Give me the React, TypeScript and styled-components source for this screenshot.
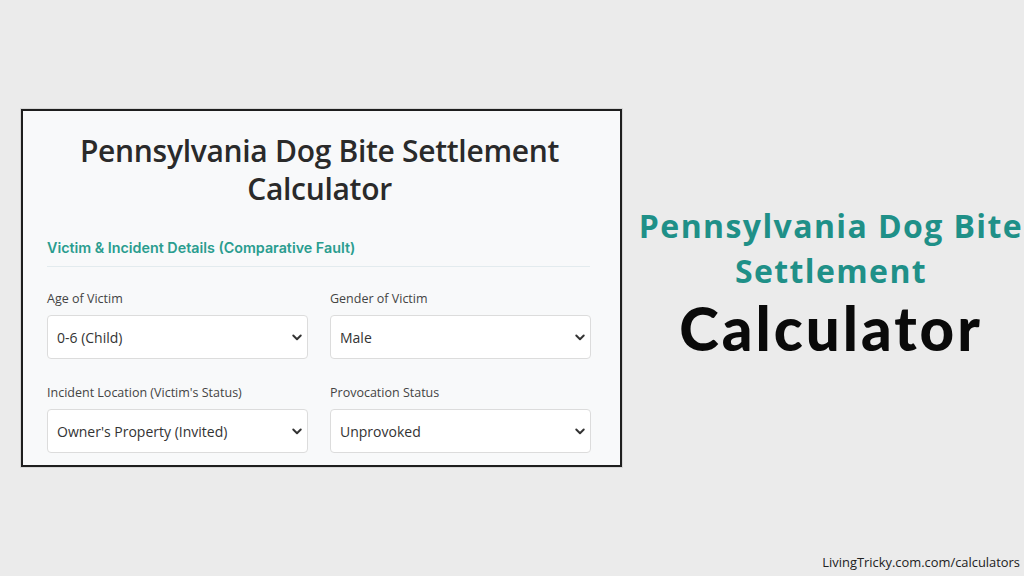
import React from 'react';
import styled, { createGlobalStyle } from 'styled-components';

const GlobalStyle = createGlobalStyle`
  html, body {
    margin: 0;
    padding: 0;
    background: #ebebeb;
  }
  * {
    box-sizing: border-box;
  }
`;

const Page = styled.div`
  width: 1024px;
  height: 576px;
  display: flex;
  flex-direction: column;
  overflow: hidden;
`;

const Main = styled.div`
  display: flex;
  align-items: flex-start;
  padding: 109px 0 0 21px;
`;

const Card = styled.div`
  width: 601px;
  height: 358px;
  background: #f8f9fa;
  border: 2px solid #1e1e1e;
  box-shadow: 0 0 0 1px #d6d6d6;
  padding: 21px 30px 0 24px;
  display: flex;
  flex-direction: column;
  overflow: hidden;
`;

const Title = styled.h1`
  margin: 0;
  font-family: 'Open Sans', 'Noto Sans', sans-serif;
  font-weight: 600;
  font-size: 30px;
  line-height: 38px;
  color: #2a2a2a;
  text-align: center;
  padding-left: 2px;
  letter-spacing: -0.3px;
`;

const SectionTitle = styled.h2`
  margin: 31px 0 0;
  font-family: 'Inter', 'Roboto', sans-serif;
  font-weight: 600;
  font-size: 14.3px;
  letter-spacing: 0;
  color: #2a9d8f;
  padding-bottom: 10px;
  border-bottom: 1px solid #e3ebee;
`;

const FieldGrid = styled.div`
  display: grid;
  grid-template-columns: 261px 261px;
  column-gap: 22px;
  row-gap: 25px;
  margin-top: 23px;
`;

const Field = styled.div`
  display: flex;
  flex-direction: column;
  gap: 8px;
`;

const Label = styled.label`
  font-family: 'Open Sans', 'Noto Sans', sans-serif;
  font-size: 12.5px;
  color: #444;
  line-height: 17px;
`;

const Select = styled.div`
  height: 44px;
  background: #fff;
  border: 1px solid #dcdcdc;
  border-radius: 4px;
  display: flex;
  align-items: center;
  justify-content: space-between;
  padding: 0 4px 0 9px;
  font-family: 'Open Sans', 'Noto Sans', sans-serif;
  font-size: 14px;
  color: #333;
`;

const Side = styled.div`
  flex: 1;
  display: flex;
  flex-direction: column;
  align-items: center;
  padding-top: 94px;
  padding-left: 16px;
`;

const SideTitle = styled.div`
  font-family: 'Open Sans', sans-serif;
  font-weight: 700;
  font-size: 32px;
  line-height: 45px;
  color: #1f9088;
  text-align: center;
  letter-spacing: 1.4px;
`;

const SideBig = styled.div`
  font-family: 'Lato', sans-serif;
  font-weight: 900;
  font-size: 60px;
  line-height: 70px;
  color: #0a0a0a;
  letter-spacing: 3px;
  margin-top: 0;
`;

const Footer = styled.div`
  margin-top: auto;
  padding: 0 4px 5px 0;
  text-align: right;
  font-family: 'Open Sans', 'Noto Sans', sans-serif;
  font-size: 12.9px;
  color: #222;
`;

const Chevron = () => (
  <svg width="12" height="12" viewBox="0 0 16 16">
    <path d="M3 6l5 5 5-5" fill="none" stroke="#333" strokeWidth="2.6" strokeLinecap="round" strokeLinejoin="round" />
  </svg>
);

const fields = [
  { label: 'Age of Victim', value: '0-6 (Child)' },
  { label: 'Gender of Victim', value: 'Male' },
  { label: "Incident Location (Victim's Status)", value: "Owner's Property (Invited)" },
  { label: 'Provocation Status', value: 'Unprovoked' },
];

export default function App() {
  return (
    <Page>
      <GlobalStyle />
      <Main>
        <Card>
          <Title>
            Pennsylvania Dog Bite Settlement
            <br />
            Calculator
          </Title>
          <SectionTitle>Victim &amp; Incident Details (Comparative Fault)</SectionTitle>
          <FieldGrid>
            {fields.map((f) => (
              <Field key={f.label}>
                <Label>{f.label}</Label>
                <Select>
                  <span>{f.value}</span>
                  <Chevron />
                </Select>
              </Field>
            ))}
          </FieldGrid>
        </Card>
        <Side>
          <SideTitle>
            Pennsylvania Dog Bite
            <br />
            Settlement
          </SideTitle>
          <SideBig>Calculator</SideBig>
        </Side>
      </Main>
      <Footer>LivingTricky.com.com/calculators</Footer>
    </Page>
  );
}
